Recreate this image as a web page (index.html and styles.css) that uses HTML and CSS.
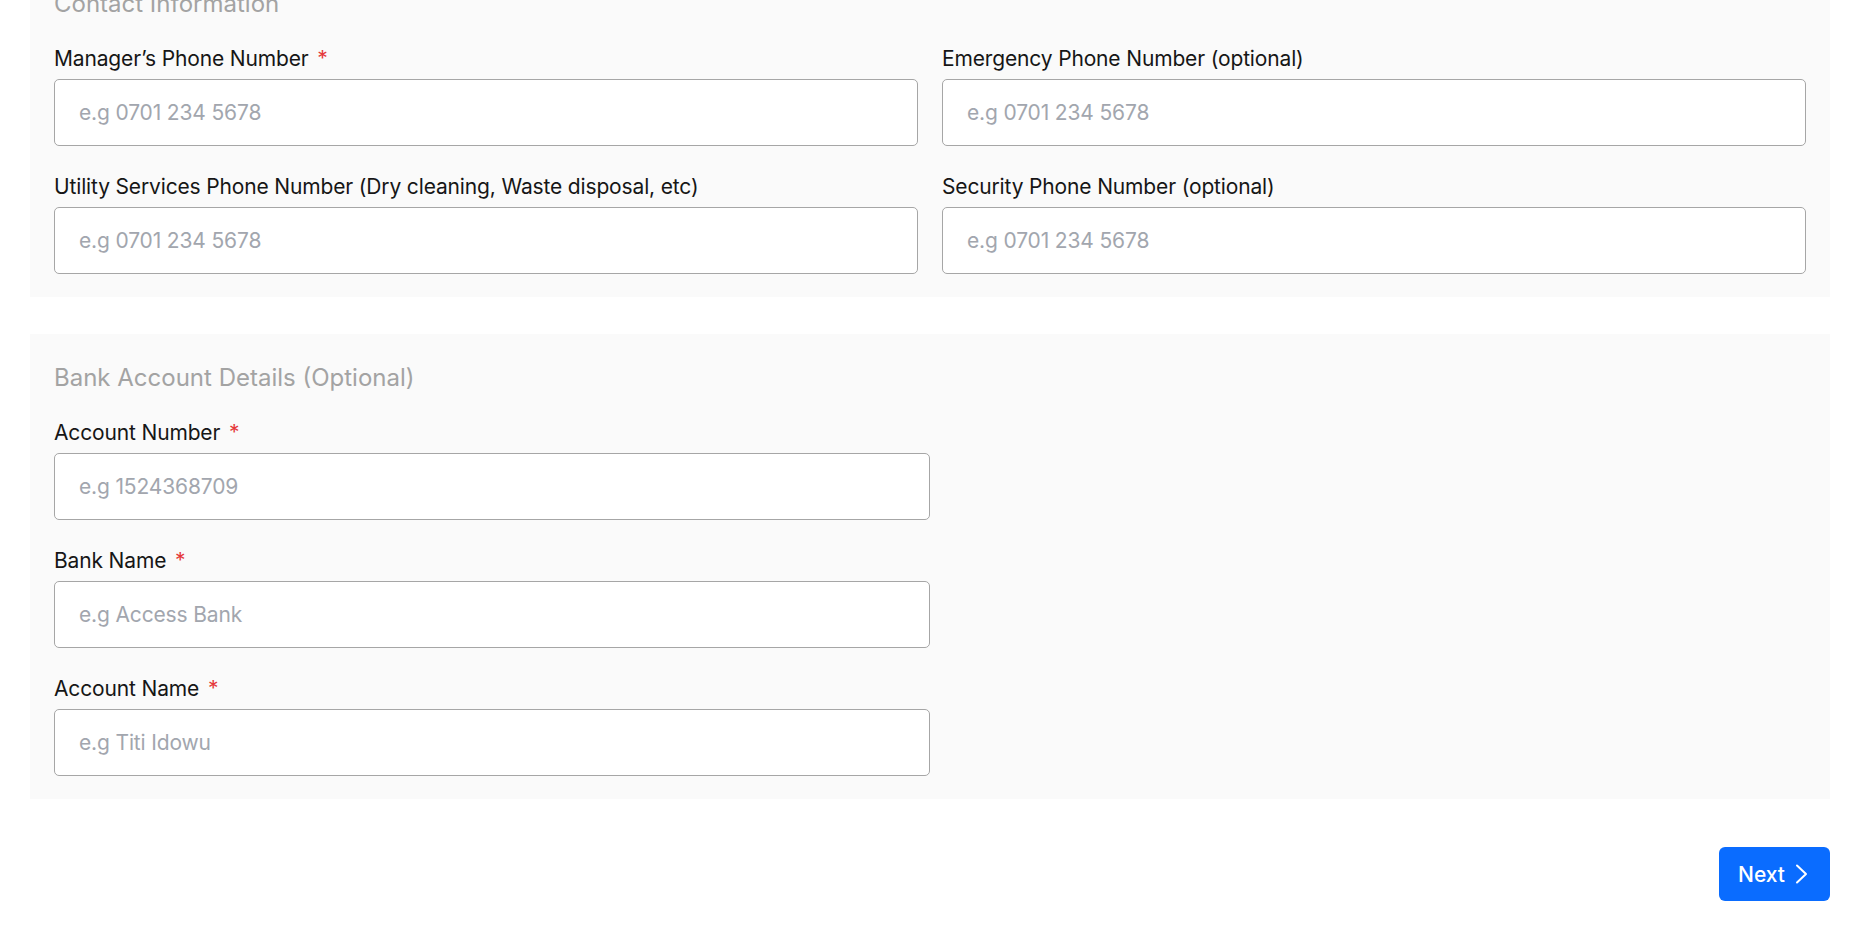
FILE: index.html
```html
<!DOCTYPE html>
<html lang="en">
  <head>
    <meta charset="UTF-8" />
    <meta name="viewport" content="width=device-width, initial-scale=1.0" />
    <title>Property Setup - Contact &amp; Bank</title>
    <link rel="stylesheet" href="styles.css">
  </head>
  <body>
    <main class="page">
      <section class="panel">
        <h2 class="panel-title">Contact Information</h2>
        <div class="grid-two">
          <div class="field">
            <label for="manager-phone">Manager’s Phone Number <span class="req">*</span></label>
            <input id="manager-phone" type="tel" placeholder="e.g 0701 234 5678">
          </div>
          <div class="field">
            <label for="emergency-phone">Emergency Phone Number (optional)</label>
            <input id="emergency-phone" type="tel" placeholder="e.g 0701 234 5678">
          </div>
          <div class="field">
            <label for="utility-phone">Utility Services Phone Number (Dry cleaning, Waste disposal, etc)</label>
            <input id="utility-phone" type="tel" placeholder="e.g 0701 234 5678">
          </div>
          <div class="field">
            <label for="security-phone">Security Phone Number (optional)</label>
            <input id="security-phone" type="tel" placeholder="e.g 0701 234 5678">
          </div>
        </div>
      </section>

      <section class="panel">
        <h2 class="panel-title">Bank Account Details (Optional)</h2>
        <div class="grid-one">
          <div class="field">
            <label for="account-number">Account Number <span class="req">*</span></label>
            <input id="account-number" type="text" placeholder="e.g 1524368709">
          </div>
          <div class="field">
            <label for="bank-name">Bank Name <span class="req">*</span></label>
            <input id="bank-name" type="text" placeholder="e.g Access Bank">
          </div>
          <div class="field">
            <label for="account-name">Account Name <span class="req">*</span></label>
            <input id="account-name" type="text" placeholder="e.g Titi Idowu">
          </div>
        </div>
      </section>

      <div class="actions">
        <button class="btn-next" type="button">
          Next
          <svg width="24" height="24" viewBox="0 0 24 24" fill="none" stroke="currentColor" stroke-width="2" stroke-linecap="round" stroke-linejoin="round"><path d="M8 3.5l9 8.5-9 8.5"/></svg>
        </button>
      </div>
    </main>
  </body>
</html>
```

FILE: styles.css
```css
* {
  box-sizing: border-box;
}
body {
  margin: 0;
  background-color: #ffffff;
  color: #161616;
  font-family: "Inter", "Liberation Sans", sans-serif;
}
.page {
  /* page is shown scrolled a little */
  margin-top: -40px;
  padding: 0 24px 40px 30px;
}
.panel {
  background-color: #fafafa;
  padding: 28px 24px 23px;
  margin-bottom: 37px;
}
.panel-title {
  margin: 0 0 25px;
  font-size: 24px;
  line-height: 32px;
  font-weight: 400;
  color: #a3a3a3;
}
.grid-two {
  display: grid;
  grid-template-columns: 1fr 1fr;
  column-gap: 24px;
  row-gap: 27px;
}
.grid-one {
  display: grid;
  width: 50%;
  row-gap: 27px;
}
.field {
  display: flex;
  flex-direction: column;
  gap: 6px;
}
.field label {
  font-size: 21px;
  line-height: 28px;
  letter-spacing: -0.15px;
  color: #161616;
}
.req {
  color: #e5383b;
  margin-left: 3px;
}
.field input {
  height: 67px;
  border: 1px solid #a6a6a6;
  border-radius: 5px;
  background: #ffffff;
  padding: 0 24px;
  font-family: inherit;
  font-size: 21px;
  letter-spacing: -0.15px;
  color: #161616;
}
.field input::placeholder {
  color: #a2a6ae;
}
.actions {
  display: flex;
  justify-content: flex-end;
  margin-top: 48px;
}
.btn-next {
  display: flex;
  align-items: center;
  gap: 4px;
  height: 54px;
  padding: 0 17px 0 19px;
  background-color: #0a6cff;
  color: #ffffff;
  border: none;
  border-radius: 6px;
  font-family: inherit;
  font-size: 21px;
  font-weight: 500;
}
.btn-next:hover {
  cursor: pointer;
  background-color: #0059dd;
}
```
